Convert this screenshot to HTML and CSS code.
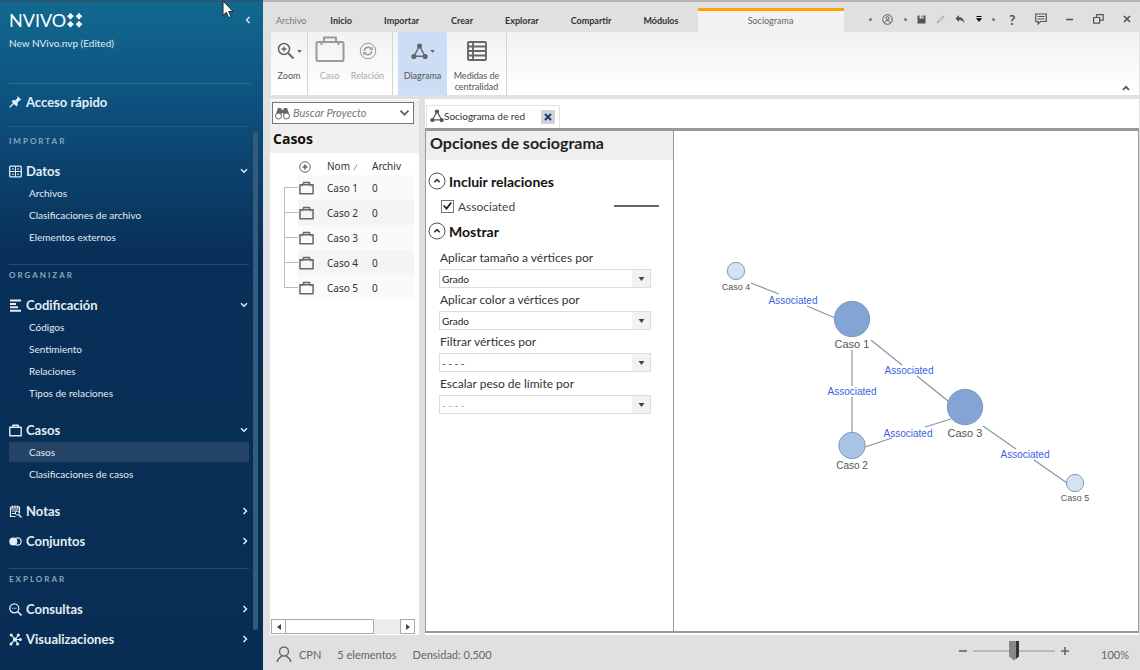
FILE: index.html
```html
<!DOCTYPE html>
<html lang="es">
<head>
<meta charset="utf-8">
<title>NVivo – Sociograma de red</title>
<link rel="stylesheet" href="styles.css">
</head>
<body>
<svg class="defs" aria-hidden="true">
  <symbol id="case" viewBox="0 0 16 14"><path d="M1 3.5h14v9.7H1z M4.8 3.5V1h6.4v2.5" fill="none" stroke="currentColor" stroke-width="1.6" stroke-linejoin="round"/><path d="M3.4 3.5v1.6M12.6 3.5v1.6" stroke="currentColor" stroke-width="1.3"/></symbol>
  <symbol id="down" viewBox="0 0 8 6"><path d="M1 1.2l3 3 3-3" fill="none" stroke="currentColor" stroke-width="1.5"/></symbol>
  <symbol id="right" viewBox="0 0 6 8"><path d="M1.5 1l3 3-3 3" fill="none" stroke="currentColor" stroke-width="1.5"/></symbol>
  <symbol id="net" viewBox="0 0 18 18"><path d="M9 3L3.2 14h11.6z" fill="none" stroke="currentColor" stroke-width="1.5"/><circle cx="9" cy="3.2" r="2.7" fill="currentColor"/><circle cx="3" cy="14.3" r="2.7" fill="currentColor"/><circle cx="15" cy="14.3" r="2.7" fill="currentColor"/></symbol>
  <symbol id="caret" viewBox="0 0 6 4"><path d="M0 0h6L3 4z" fill="currentColor"/></symbol>
</svg>
<div class="app">
  <aside class="sidebar">
    <header class="brand">
      <div class="logo"><span>NVIVO</span><svg width="16" height="15" viewBox="0 0 16 15" fill="#fff" stroke="#fff" stroke-width="1.4"><path d="M3.500.5Q4 2.800 6.300 3.300 4 3.800 3.500 6.100 3 3.800.7 3.300 3 2.800 3.500.5z"/><path d="M12 .5q.5 2.300 2.800 2.800Q12.500 3.800 12 6.100 11.500 3.800 9.200 3.300 11.500 2.800 12 .5z"/><path d="M3.500 8.500Q4 10.800 6.300 11.300 4 11.800 3.500 14.100 3 11.800.7 11.300 3 10.800 3.500 8.500z"/><path d="M12 8.500q.5 2.300 2.800 2.800Q12.500 11.800 12 14.100 11.500 11.800 9.200 11.300 11.500 10.800 12 8.500z"/></svg></div>
      <button class="collapse" aria-label="Contraer"><svg width="6" height="8" viewBox="0 0 6 8"><path d="M4.500 1l-3 3 3 3" fill="none" stroke="currentColor" stroke-width="1.400"/></svg></button>
      <p class="project">New NVivo.nvp (Edited)</p>
    </header>
    <a class="group quick" href="#"><svg width="13" height="13" viewBox="0 0 13 13"><path d="M8 .5l4.500 4.500-1.600.3-2.300 2.300.1 2.600-1.200 1.200-5-5L3.700 5.200l2.600.1 2.300-2.300z" fill="currentColor"/><path d="M5 8L.700 12.300" stroke="currentColor" stroke-width="1.300"/></svg><span>Acceso rápido</span></a>
    <div class="navwrap">
      <nav>
        <section>
          <h2>IMPORTAR</h2>
          <a class="group" href="#"><svg width="13" height="13" viewBox="0 0 13 13"><rect x=".7" y="1.200" width="11.600" height="10.600" rx="1" fill="none" stroke="currentColor" stroke-width="1.300"/><path d="M.700 6.500h11.600M6.500 1.200v10.600" stroke="currentColor"/><path d="M3 4h2M8 4h2M3 9.200h2M8 9.200h2" stroke="currentColor"/></svg><span>Datos</span><svg class="chev" width="8" height="6"><use href="#down"/></svg></a>
          <ul><li><a href="#">Archivos</a></li><li><a href="#">Clasificaciones de archivo</a></li><li><a href="#">Elementos externos</a></li></ul>
        </section>
        <section>
          <h2>ORGANIZAR</h2>
          <a class="group" href="#"><svg width="13" height="13" viewBox="0 0 13 13"><path d="M1 1.500h11M1 4.900h6M1 8.300h8M1 11.700h11" stroke="currentColor" stroke-width="2"/></svg><span>Codificación</span><svg class="chev" width="8" height="6"><use href="#down"/></svg></a>
          <ul><li><a href="#">Códigos</a></li><li><a href="#">Sentimiento</a></li><li><a href="#">Relaciones</a></li><li><a href="#">Tipos de relaciones</a></li></ul>
          <a class="group far" href="#"><svg width="13" height="13" viewBox="0 0 13 13"><path d="M.800 3.300h11.400v8.500H.800zM3.800 3.300V1.200h5.400v2.100" fill="none" stroke="currentColor" stroke-width="1.400" stroke-linejoin="round"/></svg><span>Casos</span><svg class="chev" width="8" height="6"><use href="#down"/></svg></a>
          <ul><li class="current"><a href="#">Casos</a></li><li><a href="#">Clasificaciones de casos</a></li></ul>
          <a class="group far" href="#"><svg width="13" height="13" viewBox="0 0 13 13"><path d="M1.500 2h9v6M1.500 2v9.500h5M1 4h10M3.500.5V3M6 .5V3M8.500.5V3M3 6h5M3 8.500h3" fill="none" stroke="currentColor" stroke-width="1.200"/><circle cx="8.300" cy="8" r="2" fill="none" stroke="currentColor"/><path d="M9.500 9.500l3 3" stroke="currentColor" stroke-width="1.400"/></svg><span>Notas</span><svg class="chev" width="6" height="8"><use href="#right"/></svg></a>
          <a class="group near" href="#"><svg width="13" height="13" viewBox="0 0 13 13"><circle cx="4.300" cy="6.500" r="4" fill="currentColor"/><circle cx="8.600" cy="6.500" r="3.600" fill="none" stroke="currentColor" stroke-width="1.200"/></svg><span>Conjuntos</span><svg class="chev" width="6" height="8"><use href="#right"/></svg></a>
        </section>
        <section>
          <h2>EXPLORAR</h2>
          <a class="group" href="#"><svg width="13" height="13" viewBox="0 0 13 13"><circle cx="5.300" cy="5.300" r="4.500" fill="none" stroke="currentColor" stroke-width="1.300"/><path d="M8.500 8.500l4 4" stroke="currentColor" stroke-width="1.600"/><path d="M3.200 5.300h4.200" stroke="currentColor" stroke-dasharray="1 .6"/></svg><span>Consultas</span><svg class="chev" width="6" height="8"><use href="#right"/></svg></a>
          <a class="group near" href="#"><svg width="13" height="13" viewBox="0 0 13 13" fill="currentColor"><path d="M2.500 2L6 6.500 2 11M6 6.500L9.500 2M6 6.500l3 4.500M6 6.500h5" stroke="currentColor" stroke-width="1.200" fill="none"/><circle cx="2.200" cy="2" r="1.500"/><circle cx="9.300" cy="2" r="1.600"/><circle cx="6" cy="6.500" r="2.100"/><circle cx="2" cy="11" r="1.500"/><circle cx="8.600" cy="11" r="1.600"/><circle cx="11.300" cy="6.400" r="1.500"/></svg><span>Visualizaciones</span><svg class="chev" width="6" height="8"><use href="#right"/></svg></a>
        </section>
      </nav>
      <div class="navthumb"></div>
    </div>
  </aside>

  <main class="main">
    <header class="tabs">
      <button class="file">Archivo</button><button>Inicio</button><button>Importar</button><button>Crear</button><button>Explorar</button><button>Compartir</button><button class="last">Módulos</button><button class="active">Sociograma</button>
      <div class="tools">
        <i class="dot"></i>
        <button aria-label="Usuario"><svg width="11" height="11" viewBox="0 0 11 11" fill="none" stroke="currentColor"><circle cx="5.500" cy="5.500" r="4.800"/><circle cx="5.500" cy="4.200" r="1.500"/><path d="M2.700 8.800c.5-3 5.100-3 5.600 0"/></svg></button>
        <i class="dot"></i>
        <button aria-label="Guardar"><svg width="9" height="9" viewBox="0 0 9 9"><path d="M.5.500h2v3h4v-3h2v8h-8z" fill="currentColor"/><path d="M4.500.5h1v2h-1z" fill="currentColor"/></svg></button>
        <button class="dim" aria-label="Editar"><svg width="9" height="9" viewBox="0 0 9 9"><path d="M1 8l1-2.200L6.800 1 8 2.200 3.200 7z" fill="none" stroke="currentColor"/></svg></button>
        <button aria-label="Deshacer"><svg width="10" height="9" viewBox="0 0 10 9"><path d="M4 0v2.200c3 0 5 1.500 5.300 6.300C8 5.600 6.500 5 4 5v2L.5 3.500z" fill="currentColor"/></svg></button>
        <button class="black" aria-label="Más"><svg width="6" height="6" viewBox="0 0 6 6"><path d="M.5.500h5" stroke="currentColor"/><path d="M.5 2.500h5L3 5.500z" fill="currentColor" stroke="currentColor" stroke-width=".6"/></svg></button>
        <i class="dot"></i>
      </div>
      <div class="window">
        <button class="help" aria-label="Ayuda">?</button>
        <button aria-label="Comentarios"><svg width="12" height="12" viewBox="0 0 12 12"><path d="M.7 1h10.600v7.500H5.500L3 11V8.500H.7zM2.500 3.500h7M2.500 6h7" fill="none" stroke="currentColor" stroke-width="1.200"/></svg></button>
        <button aria-label="Minimizar"><svg width="7" height="3"><path d="M0 1.500h7" stroke="currentColor" stroke-width="1.600"/></svg></button>
        <button aria-label="Restaurar"><svg width="11" height="10" viewBox="0 0 11 10"><path d="M.6 3.500h6v5.600h-6zM3.500 3.500V.7h6.700v5.500H6.600" fill="none" stroke="currentColor" stroke-width="1.200"/></svg></button>
        <button aria-label="Cerrar"><svg width="8" height="8" viewBox="0 0 8 8"><path d="M1 1l6 6M7 1L1 7" stroke="currentColor" stroke-width="1.700"/></svg></button>
      </div>
    </header>

    <div class="ribbon">
      <button class="cmd zoom"><span class="pic"><svg width="18" height="18" viewBox="0 0 18 18" fill="none" stroke="currentColor"><circle cx="7" cy="7" r="5.500" stroke-width="1.500"/><path d="M4.500 7h5M7 4.500v5" stroke-width="1.400"/><path d="M11 11l5.500 5.500" stroke-width="2"/></svg><svg width="5" height="3"><use href="#caret"/></svg></span><span>Zoom</span></button>
      <button class="cmd faded case"><span class="pic"><svg width="30" height="26" viewBox="0 0 30 26" fill="none" stroke="currentColor" stroke-width="2" stroke-linejoin="round"><rect x="1.500" y="6" width="27" height="19" rx="1.500"/><path d="M9 6V1.500h12V6M6.500 6v3M23.500 6v3"/></svg></span><span>Caso</span></button>
      <button class="cmd faded rel"><span class="pic"><svg width="18" height="18" viewBox="0 0 18 18" fill="none" stroke="currentColor"><circle cx="9" cy="9" r="7.800"/><path d="M5.300 9a3.800 3.800 0 0 1 6.800-2.200M12.700 9a3.800 3.800 0 0 1-6.800 2.200" stroke-width="1.400"/><path d="M13.200 4.800v2.700h-2.700M4.800 13.200v-2.700h2.700" stroke-width="1.200"/></svg></span><span>Relación</span></button>
      <button class="cmd on"><span class="pic"><svg width="17" height="17"><use href="#net"/></svg><svg width="5" height="3"><use href="#caret"/></svg></span><span>Diagrama</span></button>
      <button class="cmd measures"><span class="pic"><svg width="20" height="20" viewBox="0 0 20 20" fill="none" stroke="currentColor" stroke-width="1.900"><rect x="1" y="1" width="18" height="18" rx="1"/><path d="M1 5.500h18M1 10h18M1 14.500h18M6 1v18"/></svg></span><span>Medidas de<br>centralidad</span></button>
      <button class="fold" aria-label="Contraer cinta"><svg width="8" height="6" viewBox="0 0 8 6"><path d="M1 4.800l3-3 3 3" fill="none" stroke="currentColor" stroke-width="1.800"/></svg></button>
    </div>

    <div class="work">
      <section class="list">
        <div class="listhead">
          <label class="search"><svg width="15" height="13" viewBox="0 0 15 13"><path d="M3 1h3l1 2h1l1-2h3l2.500 7H9l-1-2H7L6 8H.5z" fill="currentColor"/><circle cx="3.500" cy="9" r="3" fill="#fff" stroke="currentColor"/><circle cx="11.500" cy="9" r="3" fill="#fff" stroke="currentColor"/></svg><input type="text" placeholder="Buscar Proyecto" aria-label="Buscar Proyecto"><svg width="11" height="8" viewBox="0 0 8 6"><use href="#down"/></svg></label>
          <h1>Casos</h1>
        </div>
        <table>
          <thead><tr><th class="tree"></th><th class="ico"><svg width="12" height="12" viewBox="0 0 12 12" fill="none" stroke="currentColor"><circle cx="6" cy="6" r="5.300"/><path d="M3.500 6h5M6 3.500v5" stroke-width="1.600"/></svg></th><th class="nom">Nom <svg width="5" height="6"><path d="M1 6l3-5.500" stroke="#999"/></svg></th><th>Archiv</th></tr></thead>
          <tbody>
            <tr><td class="tree"></td><td class="ico"><svg width="15" height="14"><use href="#case"/></svg></td><td>Caso 1</td><td>0</td></tr>
            <tr><td class="tree"></td><td class="ico"><svg width="15" height="14"><use href="#case"/></svg></td><td>Caso 2</td><td>0</td></tr>
            <tr><td class="tree"></td><td class="ico"><svg width="15" height="14"><use href="#case"/></svg></td><td>Caso 3</td><td>0</td></tr>
            <tr><td class="tree"></td><td class="ico"><svg width="15" height="14"><use href="#case"/></svg></td><td>Caso 4</td><td>0</td></tr>
            <tr><td class="tree"></td><td class="ico"><svg width="15" height="14"><use href="#case"/></svg></td><td>Caso 5</td><td>0</td></tr>
          </tbody>
        </table>
        <div class="hscroll"><button aria-label="Izquierda"><svg width="4" height="6"><path d="M4 0v6L0 3z" fill="currentColor"/></svg></button><div class="track"><div class="thumb"></div></div><button aria-label="Derecha"><svg width="4" height="6"><path d="M0 0v6l4-3z" fill="currentColor"/></svg></button></div>
      </section>

      <section class="doc">
        <div class="doctabs"><div class="doctab"><svg width="14" height="14"><use href="#net"/></svg><span>Sociograma de red</span><button aria-label="Cerrar pestaña"><svg width="8" height="8" viewBox="0 0 8 8"><path d="M1 1l6 6M7 1L1 7" stroke="currentColor" stroke-width="2"/></svg></button></div></div>
        <div class="docbody">
          <form class="options">
            <h2>Opciones de sociograma</h2>
            <h3><svg width="18" height="18" viewBox="0 0 18 18" fill="none"><circle cx="9" cy="9" r="8" stroke="#555"/><path d="M6.300 10.300L9 7.600l2.700 2.700" stroke="#333" stroke-width="1.600"/></svg>Incluir relaciones</h3>
            <div class="rel-row"><input type="checkbox" id="assoc" checked><label for="assoc">Associated</label><span class="sample"></span></div>
            <h3><svg width="18" height="18" viewBox="0 0 18 18" fill="none"><circle cx="9" cy="9" r="8" stroke="#555"/><path d="M6.300 10.300L9 7.600l2.700 2.700" stroke="#333" stroke-width="1.600"/></svg>Mostrar</h3>
            <div class="fields">
              <label for="f1">Aplicar tamaño a vértices por</label><div class="sel"><select id="f1"><option>Grado</option></select><span><svg width="7" height="4"><use href="#caret"/></svg></span></div>
              <label for="f2">Aplicar color a vértices por</label><div class="sel"><select id="f2"><option>Grado</option></select><span><svg width="7" height="4"><use href="#caret"/></svg></span></div>
              <label for="f3">Filtrar vértices por</label><div class="sel"><select id="f3"><option>- - - -</option></select><span><svg width="7" height="4"><use href="#caret"/></svg></span></div>
              <label for="f4">Escalar peso de límite por</label><div class="sel"><select id="f4" class="pale"><option>- - - -</option></select><span><svg width="7" height="4"><use href="#caret"/></svg></span></div>
            </div>
          </form>
          <svg class="graph" role="img" aria-label="Sociograma">
            <g transform="translate(-674 -131)">
              <g stroke="#8b959b" stroke-width="1.200">
                <path d="M751 283l28 11M807 306l28 12M871 340l31 25M917 376l31 25M852 350v36M852 397v35M865 447l27-9M925 427l26-8M983 426l33 23M1034 460l33 23"/>
              </g>
              <g stroke="#7f98b5">
                <circle cx="736" cy="271" r="8.600" fill="#d5e2f3"/><circle cx="852" cy="319" r="17.700" fill="#82a5d6"/><circle cx="965" cy="407" r="17.700" fill="#82a5d6"/><circle cx="852" cy="445.500" r="13.200" fill="#aac4e6"/><circle cx="1075" cy="483" r="8.600" fill="#d5e2f3"/>
              </g>
              <g class="edge"><text x="793" y="304">Associated</text><text x="909" y="374">Associated</text><text x="852" y="395">Associated</text><text x="908" y="437">Associated</text><text x="1025" y="458">Associated</text></g>
              <g class="node"><text x="736" y="290" class="s">Caso 4</text><text x="852" y="348" class="l">Caso 1</text><text x="965" y="437" class="l">Caso 3</text><text x="852" y="469" class="m">Caso 2</text><text x="1075" y="501" class="s">Caso 5</text></g>
            </g>
          </svg>
        </div>
      </section>
    </div>

    <footer class="status">
      <svg width="16" height="17" viewBox="0 0 16 17" fill="none" stroke="#666" stroke-width="1.400"><circle cx="8" cy="5.500" r="4.500"/><path d="M1 16c1.200-3.500 3-5 5-5.800M15 16c-1.200-3.500-3-5-5-5.800"/></svg>
      <span>CPN</span><span>5 elementos</span><span>Densidad: 0,500</span>
      <div class="zoomer"><button aria-label="Alejar"><svg width="8" height="8"><path d="M0 4h8" stroke="currentColor" stroke-width="1.600"/></svg></button><input type="range" aria-label="Zoom" value="50"><button aria-label="Acercar"><svg width="8" height="8"><path d="M0 4h8M4 0v8" stroke="currentColor" stroke-width="1.600"/></svg></button></div>
      <output>100%</output>
    </footer>
  </main>
</div>
<svg class="cursor" width="12" height="19" viewBox="0 0 12 19"><path d="M1 1v14.500l3.300-3.200 2.400 5.400 2.300-1-2.400-5.300H11z" fill="#fff" stroke="#222"/></svg>
</body>
</html>
```
FILE: styles.css
```css
* { box-sizing: border-box; }
body { margin: 0; font-family: Lato, "Liberation Sans", sans-serif; font-size: 10px; color: #222; }
h1, h2, h3, p, ul { margin: 0; padding: 0; }
ul { list-style: none; }
a { color: inherit; text-decoration: none; }
button { margin: 0; padding: 0; border: 0; background: none; color: inherit; font: inherit; }
svg { display: block; flex: none; }
.defs { position: absolute; width: 0; height: 0; }
.app { display: flex; min-height: 100vh; }

.sidebar { width: 263px; flex: none; display: flex; flex-direction: column; padding-left: 9px; color: #e3edf4; border-top: 2px solid #2a5876; background: linear-gradient(#11698f, #0d4f7c 110px, #082f57 255px, #082e55); }
.brand { display: grid; grid-template-columns: 1fr auto; align-content: start; height: 82px; margin-right: 12px; padding-top: 8px; border-bottom: 1px solid #2b6f95; }
.logo { display: flex; align-items: center; gap: 1px; height: 20px; font-size: 18px; line-height: 20px; color: #fff; }
.collapse { display: grid; place-items: center; }
.project { padding-top: 5px; line-height: 16px; font-size: 10px; }
.group { display: flex; align-items: center; gap: 4px; height: 22px; padding-right: 1px; font-size: 13px; font-weight: bold; }
.group .chev { margin-left: auto; }
.quick { height: 43px; margin-right: 14px; padding-bottom: 7px; border-bottom: 1px solid #245f88; }
.navwrap { display: flex; flex: 1; }
nav { flex: 1; }
nav section { padding-bottom: 16px; }
nav section + section { border-top: 1px solid #214f77; padding-top: 2px; }
nav section:first-child { padding-top: 6px; }
nav section:last-child { padding-bottom: 0; }
nav h2 { height: 16px; margin-bottom: 11px; font-size: 8px; line-height: 16px; font-weight: bold; letter-spacing: 2px; color: #8aa8be; }
nav li { height: 22px; padding: 1px 0; }
nav li a { display: block; height: 20px; padding-left: 20px; line-height: 20px; }
nav li.current a { background: #234367; }
.far { margin-top: 15px; }
.near { margin-top: 8px; }
.navthumb { width: 5px; margin: 5px 5px 40px 4px; border-radius: 2px; background: #335b7e; }

.main { flex: 1; min-width: 0; display: flex; flex-direction: column; background: #e0e0e0; border-top: 2px solid #b2b2b2; }
.tabs { display: flex; height: 30px; padding: 6px 9px 0 13px; align-items: stretch; }
.tabs > button { margin-right: 32px; font-size: 9px; font-weight: bold; color: #333; }
.tabs > .file { margin-right: 24px; color: #777; font-weight: normal; }
.tabs > .last { margin-right: 19px; }
.tabs > .active { width: 146px; margin: 0; border-top: 3px solid #ffa200; padding-bottom: 3px; background: #f2f2f2; color: #666; font-weight: normal; }
.tools, .window { display: flex; align-items: center; justify-content: space-between; padding-bottom: 2px; color: #555; }
.tools { width: 126px; margin-left: auto; }
.window { width: 122px; margin-left: 14px; }
.dot { width: 3px; height: 3px; border-radius: 50%; background: #777; }
.dim { color: #aaa; }
.black { color: #000; }
.help { font-size: 14px; font-weight: bold; }
.ribbon { display: flex; height: 63px; margin: 0 1px 0 8px; background: linear-gradient(#f2f2f2, #fff); color: #555; }
.cmd { display: flex; flex-direction: column; align-items: center; font-size: 9px; line-height: 11px; }
.pic { display: flex; align-items: center; justify-content: center; gap: 2px; height: 38px; flex: none; color: #666; }
.zoom { width: 37px; border-right: 1px solid #d5d5d5; }
.faded { color: #aaa; }
.faded .pic { color: #999; }
.case { width: 43px; }
.case .pic { padding-bottom: 4px; }
.rel { width: 42px; padding-right: 8px; border-right: 1px solid #d5d5d5; }
.on { width: 49px; margin-left: 5px; background: #ccddf5; }
.measures { width: 60px; border-right: 1px solid #d5d5d5; }
.fold { margin: auto 9px 4px auto; }

.work { flex: 1; display: flex; gap: 6px; padding: 4px 1px 0 7px; }
.list { width: 149px; flex: none; display: flex; flex-direction: column; background: #fff; }
.listhead { padding: 2px 5px 0 2px; height: 54px; background: #efefef; border-top: 1px solid #fff; }
.search { display: flex; align-items: center; height: 22px; padding: 0 3px 0 2px; border: 1px solid #777; background: #fff; color: #666; }
.search input { flex: 1; min-width: 0; border: 0; padding: 0 0 2px 3px; background: none; font: italic 11px Lato, sans-serif; outline: 0; }
.search input::placeholder { color: #777; }
h1 { padding-left: 1px; font: bold 14px/29px "Open Sans", sans-serif; color: #111; }
table { border-collapse: collapse; margin: 0 5px 0 14px; font: 10px "Noto Sans", sans-serif; color: #333; }
th { height: 22px; padding: 3px 0 0; font-weight: normal; text-align: left; }
th svg, td svg { display: inline-block; vertical-align: middle; }
td { height: 25px; padding: 0; }
.tree { width: 14px; }
td.tree { background: linear-gradient(#bbb, #bbb) 0 50% / 100% 1px no-repeat, linear-gradient(#bbb, #bbb) 0 0 / 1px 100% no-repeat; }
tr:first-child td.tree { background-size: 100% 1px, 1px 50%; background-position: 0 50%, 0 100%; }
tr:last-child td.tree { background-size: 100% 1px, 1px 50%; }
.ico { width: 29px; padding-left: 1px; color: #666; }
.nom { width: 45px; }
tbody tr:nth-child(odd) td:not(.tree) { background: #fafafa; }
tbody tr:nth-child(even) td:not(.tree) { background: #f4f4f4; }
.hscroll { display: flex; margin: auto 4px 1px 1px; height: 15px; background: #ececec; }
.hscroll button { width: 15px; display: grid; place-items: center; border: 1px solid #aaa; background: #fff; color: #444; }
.track { flex: 1; }
.thumb { width: 77%; height: 15px; border: 1px solid #aaa; border-left: 0; background: #fff; }

.doc { flex: 1; min-width: 0; display: flex; flex-direction: column; background: #fff; }
.doctabs { height: 29px; padding: 6px 0 0 1px; }
.doctab { display: flex; align-items: center; width: 134px; height: 23px; padding: 0 4px 2px 3px; border: 1px solid #e2e2e2; border-bottom: 0; font-size: 10px; color: #333; }
.doctab svg { color: #555; }
.doctab button { display: grid; place-items: center; width: 14px; height: 14px; margin: 2px 0 0 auto; background: #d3d3d3; }
.doctab button svg { color: #163b85; }
.docbody { flex: 1; display: flex; border: 2px solid #999; border-top: 3px solid #999; border-left-width: 1px; border-right-width: 1px; margin-bottom: 2px; }
.options { width: 248px; flex: none; border-right: 1px solid #999; }
.options h2 { height: 29px; padding-left: 4px; background: #efefef; font-size: 16px; line-height: 24px; color: #222; }
.options h3 { display: flex; align-items: center; gap: 3px; height: 22px; padding-left: 2px; font-size: 14px; color: #111; }
.options h2 + h3 { margin-top: 10px; }
.rel-row { display: flex; align-items: center; height: 28px; padding: 0 14px 0 15px; font-size: 12px; color: #444; }
.rel-row input { appearance: none; display: grid; place-items: center; width: 13px; height: 13px; margin: 0 4px 0 0; border: 1px solid #777; background: #fff; }
.rel-row input:checked::before { content: ""; width: 9px; height: 8px; background: #222; clip-path: polygon(0 50%, 15% 38%, 38% 65%, 85% 0, 100% 12%, 40% 100%); }
.sample { width: 45px; height: 2px; margin-left: auto; background: #666; }
.fields { display: flex; flex-direction: column; padding: 6px 22px 0 13px; font-size: 12px; color: #333; }
.fields label { height: 21px; padding-left: 1px; line-height: 19px; }
.sel { display: flex; height: 19px; margin-bottom: 2px; border: 1px solid #ddd; background: #fff; }
.sel select { appearance: none; flex: 1; min-width: 0; padding: 0 2px; border: 0; background: none; color: #222; font: 10px Lato, sans-serif; }
.sel .pale { color: #999; }
.sel span { display: grid; place-items: center; width: 18px; background: #f2f2f2; color: #444; }
.graph { flex: 1; min-width: 0; height: auto; align-self: stretch; }
.graph text { text-anchor: middle; font-family: "Liberation Sans", sans-serif; }
.edge { fill: #3d5fe0; font-size: 10px; }
.node { fill: #555; }
.s { font-size: 9px; }
.m { font-size: 10px; }
.l { font-size: 11px; }

.status { display: flex; align-items: center; gap: 16px; height: 35px; padding: 4px 11px 0 13px; font-size: 11px; color: #666; }
.status > svg + span { margin-left: -9px; }
.zoomer { display: flex; align-items: center; gap: 6px; margin-left: auto; padding-bottom: 8px; }
.zoomer input { appearance: none; width: 82px; height: 20px; margin: 0; background: linear-gradient(#bbb, #bbb) center / 100% 2px no-repeat; }
.zoomer input::-webkit-slider-thumb { appearance: none; width: 10px; height: 20px; background: linear-gradient(90deg, #888 70%, #333 70%); clip-path: polygon(0 0, 100% 0, 100% 80%, 50% 100%, 0 80%); }
.status output { margin-left: 16px; }
.cursor { position: absolute; left: 222px; top: 0; }
```
